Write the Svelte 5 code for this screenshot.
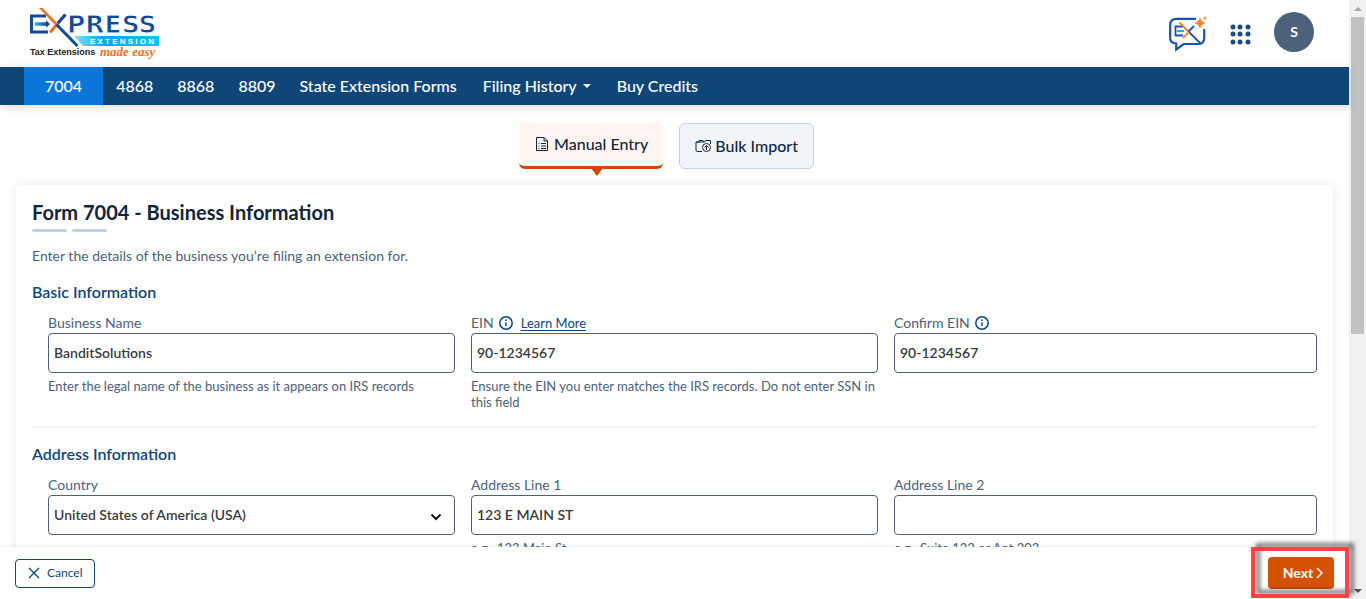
<script lang="ts">
	const links = ['4868', '8868', '8809', 'State Extension Forms'];
	const dots = [3, 10, 18];

	let businessName = $state('BanditSolutions');
	let ein = $state('90-1234567');
	let confirmEin = $state('90-1234567');
	let country = $state('United States of America (USA)');
	let address1 = $state('123 E MAIN ST');
	let address2 = $state('');
</script>

{#snippet info()}
	<svg class="info" viewBox="0 0 14 14" aria-hidden="true">
		<circle cx="7" cy="7" r="6.2" fill="none" stroke="currentColor" stroke-width="1.5" />
		<path d="M7 6.2v4" stroke="currentColor" stroke-width="1.4" />
		<circle cx="7" cy="4.2" r="0.9" fill="currentColor" />
	</svg>
{/snippet}

<div class="window">
	<div class="page">
		<header class="header">
			<a class="logo" href="#home" aria-label="Express Extension">
				<svg viewBox="0 0 132 54" aria-hidden="true">
					<defs>
						<linearGradient id="band">
							<stop offset="0" stop-color="#8ddcf8" />
							<stop offset="0.35" stop-color="#12a5ea" />
							<stop offset="1" stop-color="#12c4f4" />
						</linearGradient>
						<linearGradient id="arrow">
							<stop offset="0" stop-color="#25b9e8" />
							<stop offset="1" stop-color="#1b2a80" />
						</linearGradient>
					</defs>
					<path d="M16 9H1.500V25H18" fill="none" stroke="#124a94" stroke-width="3" />
					<path d="M5 15.300h11v-2l4 3.700-4 3.700v-2H5z" fill="url(#arrow)" />
					<path d="M35 8L20 25.500" stroke="#f36f21" stroke-width="3" />
					<path d="M9 1h3.500L30 19l-2 2z" fill="#f36f21" />
					<path d="M26.500 17.500L47.500 39" stroke="#124a94" stroke-width="3" />
					<path d="M35.500 7.500L28 16" stroke="#124a94" stroke-width="3" />
					<path d="M44 29h85v10H53z" fill="url(#band)" />
					<text class="logo__name" x="37" y="26">PRESS</text>
					<text class="logo__band" x="60" y="37">E X T E N S I O N</text>
					<text class="logo__tag" x="0" y="48">Tax Extensions</text>
					<text class="logo__script" x="70" y="49">made easy</text>
				</svg>
			</a>
			<div class="header__tools">
				<button class="tool" aria-label="Chat">
					<svg class="chat" viewBox="0 0 38 36" aria-hidden="true">
						<path d="M27 2.800H7.500Q1.200 2.800 1.200 9v13q0 5 6 5.500v6l7.500-5.500H29q6.200 0 6.200-6V13" fill="none" stroke="#1556ac" stroke-width="2.200" />
						<path d="M14 10.500H6.500v9H14" fill="none" stroke="#1556ac" stroke-width="1.800" />
						<path d="M8 15h7" stroke="#19aee5" stroke-width="2" />
						<path d="M20 16L31 27" stroke="#1556ac" stroke-width="1.800" />
						<path d="M10.500 6.500L20 16L14 22" fill="none" stroke="#f98122" stroke-width="1.800" />
						<path d="M19.500 15.500L25 10" stroke="#1556ac" stroke-width="1.800" />
						<path d="M31 1q1 5 6 6-5 1-6 6-1-5-6-6 5-1 6-6z" fill="#f98122" />
						<path d="M36 0q.3 1.700 2 2-1.700.3-2 2-.3-1.700-2-2 1.700-.3 2-2z" fill="#f98122" />
					</svg>
				</button>
				<button class="tool" aria-label="Products">
					<svg class="grid-icon" viewBox="0 0 21 21" aria-hidden="true">
						{#each dots as cy}
							{#each dots as cx}
								<circle {cx} {cy} r="2.500" fill="#194b87" />
							{/each}
						{/each}
					</svg>
				</button>
				<button class="avatar" aria-label="Account">S</button>
			</div>
		</header>

		<nav class="nav">
			<a class="nav__link nav__link--active" href="#7004">7004</a>
			{#each links as link}
				<a class="nav__link" href="#form">{link}</a>
			{/each}
			<button class="nav__link nav__link--menu">Filing History <span class="caret"></span></button>
			<a class="nav__link" href="#credits">Buy Credits</a>
		</nav>

		<main class="content">
			<div class="tabs">
				<button class="tab tab--active">
					<svg class="tab__icon" viewBox="0 0 14 16" aria-hidden="true">
						<path d="M1.500 1.500h7.500l3.500 3.500v9.500h-11zM9 1.500V5h3.500M3.500 7.500h1M6 7.500h5M3.500 10h1M6 10h5M3.500 12.500h1M6 12.500h5" fill="none" stroke="currentColor" />
					</svg>
					Manual Entry
				</button>
				<button class="tab">
					<svg class="tab__icon" viewBox="0 0 16 16" aria-hidden="true">
						<path d="M7 13.500H2.500q-1.500 0-1.500-1.500V4h3V2.500h4l1 1.500M9 4l2-1.500h4.500V6M1 4h8.500" fill="none" stroke="currentColor" />
						<circle cx="11.500" cy="9.500" r="4" fill="none" stroke="currentColor" />
						<path d="M11.500 12V8M9.500 9.500l2-2 2 2" fill="none" stroke="currentColor" />
					</svg>
					Bulk Import
				</button>
			</div>

			<form class="card">
				<h1 class="card__title">Form 7004 - Business Information</h1>
				<div class="dashes"><span></span><span></span></div>
				<p class="card__intro">Enter the details of the business you’re filing an extension for.</p>

				<section class="section">
					<h2 class="section__title">Basic Information</h2>
					<div class="fields">
						<div class="field">
							<div class="field__label"><label for="business">Business Name</label></div>
							<input id="business" class="field__input" type="text" bind:value={businessName} />
							<p class="field__hint">Enter the legal name of the business as it appears on IRS records</p>
						</div>
						<div class="field">
							<div class="field__label">
								<label for="ein">EIN</label>
								{@render info()}
								<a class="field__link" href="#learn">Learn More</a>
							</div>
							<input id="ein" class="field__input" type="text" bind:value={ein} />
							<p class="field__hint">Ensure the EIN you enter matches the IRS records. Do not enter SSN in this field</p>
						</div>
						<div class="field">
							<div class="field__label">
								<label for="confirm">Confirm EIN</label>
								{@render info()}
							</div>
							<input id="confirm" class="field__input" type="text" bind:value={confirmEin} />
						</div>
					</div>
				</section>

				<section class="section">
					<h2 class="section__title">Address Information</h2>
					<div class="fields">
						<div class="field">
							<div class="field__label"><label for="country">Country</label></div>
							<div class="select">
								<select id="country" class="field__input" bind:value={country}>
									<option>United States of America (USA)</option>
								</select>
								<svg class="select__arrow" viewBox="0 0 12 8" aria-hidden="true">
									<path d="M1.500 1.500L6 6l4.500-4.500" fill="none" stroke="#111" stroke-width="2" />
								</svg>
							</div>
						</div>
						<div class="field">
							<div class="field__label"><label for="address1">Address Line 1</label></div>
							<input id="address1" class="field__input" type="text" bind:value={address1} />
							<p class="field__hint">e.g., 123 Main St</p>
						</div>
						<div class="field">
							<div class="field__label"><label for="address2">Address Line 2</label></div>
							<input id="address2" class="field__input" type="text" bind:value={address2} />
							<p class="field__hint">e.g., Suite 122 or Apt 203</p>
						</div>
					</div>
				</section>
			</form>
		</main>

		<footer class="footer">
			<button class="cancel">
				<svg class="cancel__icon" viewBox="0 0 12 12" aria-hidden="true">
					<path d="M1 1l10 10M11 1L1 11" stroke="currentColor" stroke-width="1.300" />
				</svg>
				Cancel
			</button>
			<div class="next-wrap">
				<button class="next">
					Next
					<svg class="next__icon" viewBox="0 0 7 12" aria-hidden="true">
						<path d="M1 1l5 5-5 5" fill="none" stroke="currentColor" stroke-width="1.500" />
					</svg>
				</button>
				<span class="highlight"></span>
			</div>
		</footer>
	</div>

	<div class="scroll" aria-hidden="true">
		<span class="scroll__up"></span>
		<span class="scroll__thumb"></span>
		<span class="scroll__down"></span>
	</div>
</div>

<style>
	:global(body) {
		background: #fff;
	}

	* {
		box-sizing: border-box;
	}

	.window {
		display: grid;
		grid-template-columns: minmax(0, 1fr) 17px;
		height: 100vh;
		overflow: hidden;
		font-family: Lato, sans-serif;
		font-size: 14px;
		line-height: 20px;
		color: #4d617b;
	}

	button {
		font: inherit;
		cursor: pointer;
	}

	.page {
		display: flex;
		flex-direction: column;
		min-height: 0;
	}

	.header {
		display: flex;
		flex: none;
		align-items: center;
		justify-content: space-between;
		height: 67px;
		padding: 0 35px 0 30px;
	}

	.logo svg {
		display: block;
		width: 132px;
		height: 54px;
	}

	.logo__name {
		font: bold 25px 'DejaVu Sans', sans-serif;
		fill: #124a94;
		stroke: #fff;
		stroke-width: 1px;
	}

	.logo__band {
		font: bold 8px 'Liberation Sans', sans-serif;
		fill: #fff;
	}

	.logo__tag {
		font: bold 9px 'Liberation Sans', sans-serif;
		fill: #222;
	}

	.logo__script {
		font: italic bold 13px 'Liberation Serif', serif;
		fill: #f36f21;
	}

	.header__tools {
		display: flex;
		align-items: center;
		gap: 23px;
		padding-bottom: 3px;
	}

	.tool {
		padding: 4px 0 0;
		border: 0;
		background: none;
	}

	.chat {
		display: block;
		width: 38px;
		height: 36px;
	}

	.grid-icon {
		display: block;
		width: 21px;
		height: 21px;
	}

	.avatar {
		width: 40px;
		height: 40px;
		padding: 0;
		border: 0;
		border-radius: 50%;
		background: #4d617b;
		color: #fff;
		font-weight: 700;
	}

	.nav {
		display: flex;
		flex: none;
		height: 38px;
		padding-left: 24px;
		background: #104677;
		box-shadow: 0 2px 8px rgba(0, 0, 0, 0.15);
		position: relative;
	}

	.nav__link {
		display: flex;
		align-items: center;
		padding: 0 12px;
		border: 0;
		background: none;
		color: #fff;
		font-size: 16px;
		font-weight: 500;
		text-decoration: none;
	}

	.nav__link--active {
		margin-right: 1px;
		padding: 0 21px;
		background: #0a77d8;
	}

	.nav__link--menu {
		padding: 0 14px;
	}

	.caret {
		margin-left: 6px;
		border: 4px solid transparent;
		border-top-color: #fff;
		border-bottom: 0;
	}

	.content {
		flex: 1;
		min-height: 0;
		overflow: hidden;
		padding: 17px 16px 0;
	}

	.tabs {
		display: flex;
		align-items: flex-end;
		justify-content: center;
		gap: 16px;
		margin: 0 0 16px -16px;
	}

	.tab {
		display: flex;
		align-items: center;
		gap: 4px;
		height: 46px;
		padding: 0 15px;
		border: 1px solid #c5d1e3;
		border-radius: 6px;
		background: #f1f5fa;
		color: #10253c;
		font-size: 16px;
		font-weight: 500;
	}

	.tab--active {
		position: relative;
		height: 47px;
		border: 0;
		border-bottom: 3px solid #d64400;
		background: #fff5f2;
	}

	.tab--active::after {
		content: '';
		position: absolute;
		top: 46px;
		left: 50%;
		border: 6px solid transparent;
		border-top: 8px solid #d64400;
		border-bottom: 0;
	}

	.tab__icon {
		width: 16px;
		height: 16px;
	}

	.card {
		padding: 15px 16px;
		border-radius: 5px;
		background: #fff;
		box-shadow: 0 0 10px rgba(16, 70, 119, 0.12);
	}

	.card__title {
		margin: 0;
		font-size: 20px;
		font-weight: 700;
		line-height: 24px;
		color: #10253c;
	}

	.dashes {
		display: flex;
		gap: 5px;
		margin: 5px 0 14px;
	}

	.dashes span {
		width: 35px;
		height: 3px;
		border-radius: 2px;
		background: #c5d1e3;
	}

	.card__intro {
		margin: 0 0 16px;
	}

	.section + .section {
		margin-top: 16px;
		padding-top: 16px;
		border-top: 2px solid #f1f5fa;
	}

	.section__title {
		margin: 0 0 11px;
		font-size: 16px;
		font-weight: 600;
		line-height: 20px;
		color: #104677;
	}

	.fields {
		display: grid;
		grid-template-columns: repeat(3, minmax(0, 1fr));
		padding-left: 16px;
	}

	.field {
		padding-right: 16px;
	}

	.field:last-child {
		padding-right: 0;
	}

	.field__label {
		display: flex;
		align-items: center;
		gap: 5px;
		height: 20px;
	}

	.info {
		width: 14px;
		height: 14px;
		color: #104677;
	}

	.field__link {
		margin-left: 3px;
		font-size: 13px;
		color: #104677;
		text-underline-offset: 2px;
	}

	.field__input {
		display: block;
		width: 100%;
		height: 40px;
		padding: 0 5px 2px;
		border: 1px solid #4d617b;
		border-radius: 4px;
		background: #fff;
		font: 600 14px Lato, sans-serif;
		color: #3b3b3b;
		appearance: none;
	}

	.field__hint {
		margin: 5px 0 0;
		font-size: 13px;
		line-height: 16px;
	}

	.select {
		position: relative;
	}

	.select__arrow {
		position: absolute;
		top: 18px;
		right: 13px;
		width: 12px;
		height: 8px;
		pointer-events: none;
	}

	.footer {
		display: flex;
		flex: none;
		align-items: center;
		justify-content: space-between;
		height: 52px;
		padding: 0 15px;
		background: #fff;
		box-shadow: 0 0 4px rgba(0, 0, 0, 0.1);
		position: relative;
	}

	.cancel {
		display: flex;
		align-items: center;
		gap: 7px;
		height: 29px;
		padding: 0 12px;
		border: 1px solid #104677;
		border-radius: 4px;
		background: #fff;
		color: #104677;
		font-size: 12px;
	}

	.cancel__icon {
		width: 12px;
		height: 12px;
	}

	.next-wrap {
		position: relative;
	}

	.next {
		display: flex;
		align-items: center;
		justify-content: center;
		gap: 3px;
		width: 66px;
		height: 32px;
		padding: 0 0 0 4px;
		border: 0;
		border-radius: 4px;
		background: #d55204;
		color: #fff;
		font-weight: 700;
	}

	.next__icon {
		width: 7px;
		height: 12px;
	}

	.highlight {
		position: absolute;
		inset: -10px -15px -9px -17px;
		border: 4px solid #ff4343;
		filter: drop-shadow(5px -4px 2px rgba(0, 0, 0, 0.55));
		pointer-events: none;
	}

	.scroll {
		display: flex;
		flex-direction: column;
		align-items: center;
		background: #f1f1f1;
	}

	.scroll__up,
	.scroll__down {
		margin: 7px 0 6px;
		border: 4px solid transparent;
	}

	.scroll__up {
		border-top: 0;
		border-bottom-color: #a3a3a3;
	}

	.scroll__down {
		margin-top: auto;
		border-bottom: 0;
		border-top-color: #505050;
	}

	.scroll__thumb {
		width: 13px;
		height: 53%;
		background: #c1c1c1;
	}
</style>
